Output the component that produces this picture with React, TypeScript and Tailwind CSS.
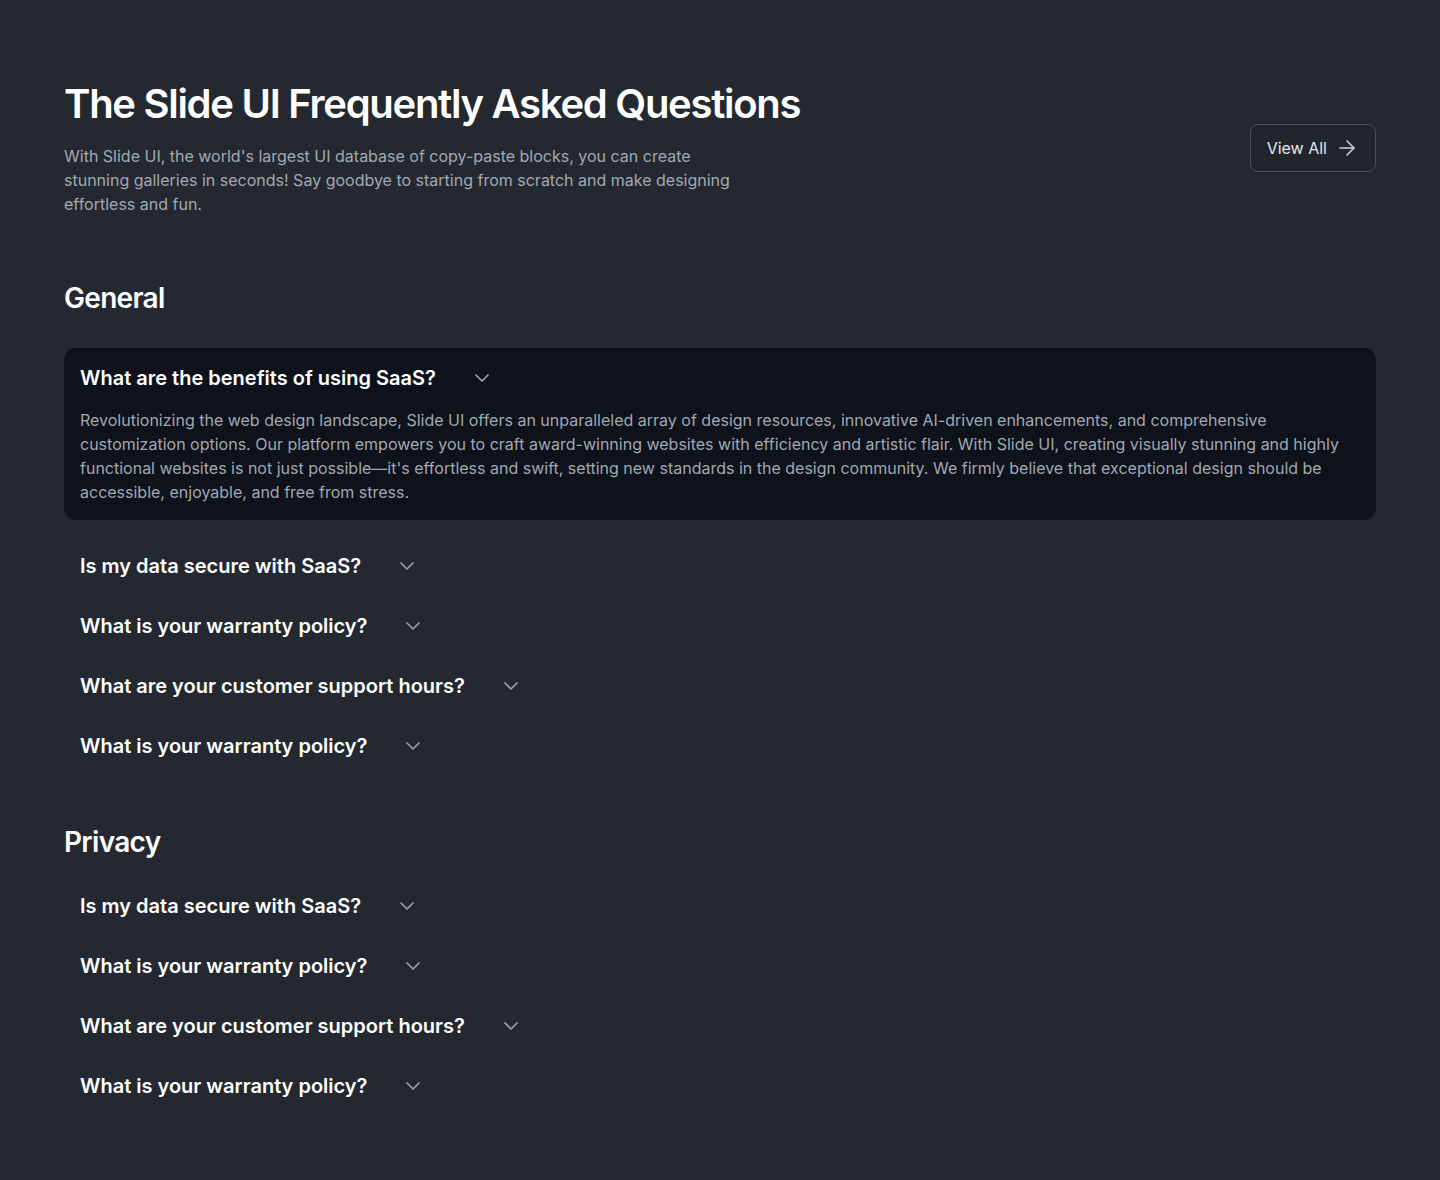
import React from "react";
import { ChevronDown, ArrowRight } from "lucide-react";

const general = [
  "Is my data secure with SaaS?",
  "What is your warranty policy?",
  "What are your customer support hours?",
  "What is your warranty policy?",
];

const privacy = [
  "Is my data secure with SaaS?",
  "What is your warranty policy?",
  "What are your customer support hours?",
  "What is your warranty policy?",
];

function Closed({ q }: { q: string }) {
  return (
    <div className="flex items-center gap-[34px] p-4">
      <span className="text-[20px] leading-7 font-semibold text-white">{q}</span>
      <ChevronDown size={24} strokeWidth={1.75} className="text-gray-400" />
    </div>
  );
}

export default function App() {
  return (
    <div
      className="min-h-[1180px] bg-[#242931] px-16 pt-20 pb-16"
      style={{ fontFamily: "Inter, 'Noto Sans', sans-serif" }}
    >
      <div className="flex items-center justify-between">
        <div>
          <h1 className="text-[40px] leading-[48px] font-semibold tracking-[-0.032em] text-white">
            The Slide UI Frequently Asked Questions
          </h1>
          <p className="mt-4 max-w-2xl text-base leading-6 text-[#a3a8b1]">
            With Slide UI, the world's largest UI database of copy-paste blocks, you can create
            stunning galleries in seconds! Say goodbye to starting from scratch and make designing
            effortless and fun.
          </p>
        </div>
        <button className="flex h-12 items-center gap-2 rounded-lg border border-[#4a505a] bg-[#21262d] px-4 text-base text-[#e5e7eb]">
          View All
          <ArrowRight size={24} strokeWidth={1.5} className="text-gray-300" />
        </button>
      </div>

      <section className="mt-16">
        <h2 className="mb-4 text-[28px] leading-9 font-semibold tracking-tight text-white">General</h2>
        <div className="flex flex-col">
          <div className="my-4 rounded-xl bg-[#0d121b] p-4">
            <div className="flex items-center gap-[34px]">
              <span className="text-[20px] leading-7 font-semibold text-white">
                What are the benefits of using SaaS?
              </span>
              <ChevronDown size={24} strokeWidth={1.75} className="text-gray-400" />
            </div>
            <p className="mt-4 text-base leading-6 text-[#a3a8b1]">
              Revolutionizing the web design landscape, Slide UI offers an unparalleled array of
              design resources, innovative AI-driven enhancements, and comprehensive customization
              options. Our platform empowers you to craft award-winning websites with efficiency and
              artistic flair. With Slide UI, creating visually stunning and highly functional
              websites is not just possible—it's effortless and swift, setting new standards in the
              design community. We firmly believe that exceptional design should be accessible,
              enjoyable, and free from stress.
            </p>
          </div>
          {general.map((q, i) => (
            <Closed key={i} q={q} />
          ))}
        </div>
      </section>

      <section className="mt-12">
        <h2 className="mb-4 text-[28px] leading-9 font-semibold tracking-tight text-white">Privacy</h2>
        <div className="flex flex-col">
          {privacy.map((q, i) => (
            <Closed key={i} q={q} />
          ))}
        </div>
      </section>
    </div>
  );
}
